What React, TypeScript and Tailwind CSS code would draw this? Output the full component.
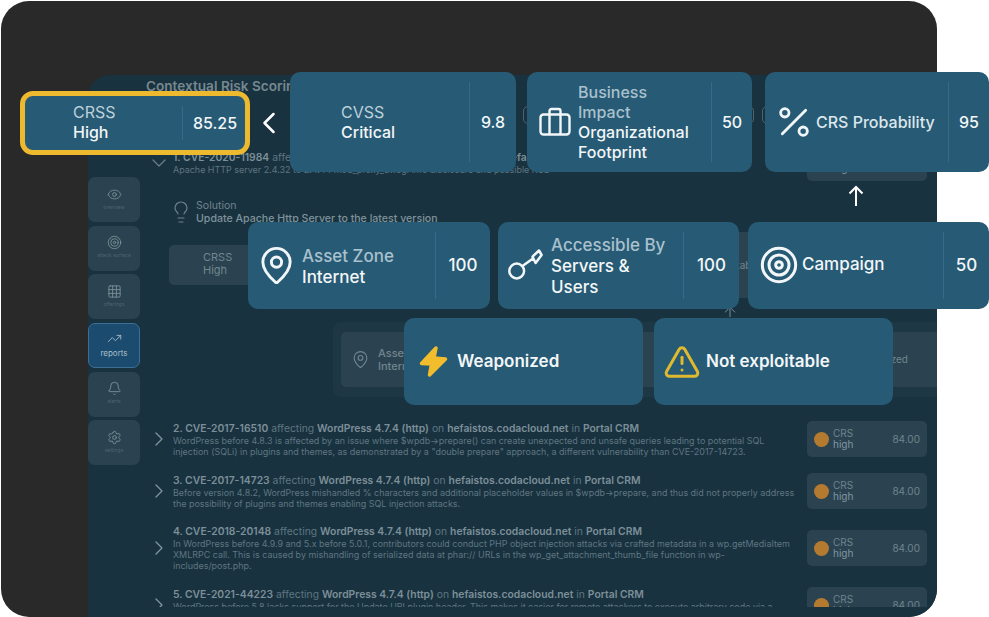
import {
  ArrowUp,
  Bell,
  ChevronDown,
  ChevronLeft,
  ChevronRight,
  Eye,
  Grid3x3,
  Lightbulb,
  MapPin,
  Percent,
  Settings,
  Target,
  TrendingUp,
  TriangleAlert,
} from 'lucide-react';
import type { ReactNode } from 'react';

const NAV = [
  { label: 'overview', Icon: Eye },
  { label: 'attack surface', Icon: Target },
  { label: 'offerings', Icon: Grid3x3 },
  { label: 'reports', Icon: TrendingUp, active: true },
  { label: 'alerts', Icon: Bell },
  { label: 'settings', Icon: Settings },
];

const ROWS = [
  {
    cve: '2. CVE-2017-16510',
    text: 'WordPress before 4.8.3 is affected by an issue where $wpdb->prepare() can create unexpected and unsafe queries leading to potential SQL injection (SQLi) in plugins and themes, as demonstrated by a "double prepare" approach, a different vulnerability than CVE-2017-14723.',
  },
  {
    cve: '3. CVE-2017-14723',
    text: 'Before version 4.8.2, WordPress mishandled % characters and additional placeholder values in $wpdb->prepare, and thus did not properly address the possibility of plugins and themes enabling SQL injection attacks.',
  },
  {
    cve: '4. CVE-2018-20148',
    text: 'In WordPress before 4.9.9 and 5.x before 5.0.1, contributors could conduct PHP object injection attacks via crafted metadata in a wp.getMediaItem XMLRPC call. This is caused by mishandling of serialized data at phar:// URLs in the wp_get_attachment_thumb_file function in wp-includes/post.php.',
  },
  {
    cve: '5. CVE-2021-44223',
    text: 'WordPress before 5.8 lacks support for the Update URI plugin header. This makes it easier for remote attackers to execute arbitrary code via a supply-chain attack against WordPress installations that use any plugin with a crafted update source for that plugin, as the header was not checked.',
  },
];

function Briefcase() {
  return (
    <svg width="32" height="30" viewBox="0 0 32 30" fill="none" stroke="currentColor" strokeWidth="2.4" strokeLinejoin="round" className="shrink-0">
      <rect x="1.5" y="7.5" width="29" height="20" rx="3" />
      <path d="M10.5 7.5v20M21.5 7.5v20M10.5 7.5V4a2 2 0 0 1 2-2h7a2 2 0 0 1 2 2v3.5" />
    </svg>
  );
}

function KeyIcon() {
  return (
    <svg width="35" height="33" viewBox="0 0 35 33" fill="none" stroke="currentColor" strokeWidth="2.5" strokeLinejoin="round" className="shrink-0">
      <circle cx="8.7" cy="22" r="7.4" />
      <path d="M14.5 17 25 9.5M24.5 7.7 31 1.5l2.6 4.5-6 8z" />
    </svg>
  );
}

function Bolt() {
  return (
    <svg width="32" height="35" viewBox="0 0 32 35" className="shrink-0">
      <polygon
        points="18,4 3.5,19.5 13.5,20 11.5,31 27.5,15 16,14"
        fill="#f2bd2c"
        stroke="#f2bd2c"
        strokeWidth="3.5"
        strokeLinejoin="round"
      />
    </svg>
  );
}

function CrsBadge() {
  return (
    <div className="ml-[9px] flex h-[36px] w-[120px] shrink-0 items-center rounded-[5px] bg-[#2b4350] px-[7px] text-[#6f838e]">
      <div className="h-[15px] w-[15px] rounded-full bg-[#b47a30]" />
      <div className="ml-[4px] text-[10px] leading-[11px]">
        CRS
        <br />
        <span className="text-[#8196a1]">high</span>
      </div>
      <div className="ml-auto text-[10px]">84.00</div>
    </div>
  );
}

function Card({ className, children, value }: { className: string; children: ReactNode; value?: string }) {
  return (
    <div className={`absolute flex items-center rounded-[10px] bg-[#275a74] font-medium text-[#f2f6f8] ${className}`}>
      {children}
      {value && (
        <>
          <div className="my-[10px] w-px self-stretch bg-[#356b86]" />
          <div className="flex-1 text-center">{value}</div>
        </>
      )}
    </div>
  );
}

export default function App() {
  return (
    <div className="relative h-[617px] w-[989px] overflow-hidden bg-white font-['Inter',sans-serif]">
      <div className="ml-px mt-px h-[616px] w-[936px] overflow-hidden rounded-[28px] bg-[#292929] pl-[87px] pt-[74px]">
        <div className="flex h-[542px] w-[849px] overflow-hidden rounded-tl-[22px] bg-[#19323f]">
          <nav className="flex w-[52px] shrink-0 flex-col gap-[3.7px] pt-[102px]">
            {NAV.map(({ label, Icon, active }) => (
              <div
                key={label}
                className={`flex h-[45px] shrink-0 flex-col items-center justify-center rounded-[7px] border pb-[3px] ${
                  active ? 'border-[#3d6f95] bg-[#1b4b6e] text-[#a9bfcc]' : 'border-transparent bg-[#2b4350] text-[#7f929c]'
                }`}
              >
                <Icon size={15} strokeWidth={1.4} />
                <span className={`mt-[3px] leading-none ${active ? 'text-[8px]' : 'text-[5px] text-[#4d6470]'}`}>{label}</span>
              </div>
            ))}
          </nav>

          <main className="h-[532px] min-w-0 flex-1 overflow-hidden pl-[5px] pr-[10px]">
            <h1 className="ml-[1px] mt-[2px] whitespace-nowrap text-[13.6px] font-semibold leading-[18px] text-[#76888f]">Contextual Risk Scoring</h1>

            <div className="mt-[11px] flex h-[18px]">
              <div className="ml-[378px] w-[231px] rounded-[5px] border border-[#4d6470]" />
              <div className="ml-[8px] w-[100px] rounded-[5px] border border-[#4d6470]" />
            </div>

            <div className="mt-[21px] flex items-center">
              <ChevronDown size={24} strokeWidth={1.2} className="w-[28px] shrink-0 text-[#6b808b]" />
              <div className="w-[625px] shrink-0 text-[8.95px] leading-[11px] text-[#5f7682]">
                <div className="text-[10.35px] leading-[13px]">
                  <b className="font-semibold text-[#7c8f99]">1. CVE-2020-11984</b> affecting{' '}
                  <b className="font-semibold text-[#7c8f99]">Apache HTTP Server 2.4.41 (http)</b> on{' '}
                  <b className="font-semibold text-[#7c8f99]">hefaistos.codacloud.net</b>
                </div>
                <div>Apache HTTP server 2.4.32 to 2.4.44 mod_proxy_uwsgi info disclosure and possible RCE</div>
              </div>
              <CrsBadge />
            </div>

            <div className="ml-[24px] mt-[18px] flex items-center gap-[3px] text-[#6f838e]">
              <Lightbulb size={24} strokeWidth={1.2} />
              <div className="text-[10.6px] leading-[13px]">
                <div>Solution</div>
                <div className="font-medium text-[#7f929c]">Update Apache Http Server to the latest version</div>
              </div>
            </div>

            <div className="mt-[7px] flex h-[66px] items-center">
              <div className="ml-[24px] h-[40px] w-[120px] rounded-[5px] bg-[#2b4350] pl-[34px] pt-[6px] text-[11px] leading-[13px] text-[#71858f]">
                CRSS
                <br />
                High
              </div>
              <div className="ml-[350px] flex h-full w-[130px] items-center rounded-[6px] bg-[#2b4350] pl-[69px] text-[10px] text-[#71858f]">
                Exploitable
              </div>
            </div>

            <div className="-mr-[10px] ml-[188px] mt-[24px] h-[75px] rounded-l-[8px] bg-[#1d3745] pl-[8px] pt-[10px]">
              <div className="flex h-[55px] items-center gap-[8px] rounded-l-[5px] bg-[#2b4350] pl-[10px] text-[#71858f]">
                <MapPin size={19} strokeWidth={1.4} />
                <div className="text-[11px] font-medium leading-[13px]">
                  Asset Zone
                  <br />
                  Internet
                </div>
                <div className="ml-auto pr-[29px] text-[10px]">Weaponized</div>
              </div>
            </div>

            <div className="mt-[24px] flex flex-col gap-[16px]">
              {ROWS.map((r) => (
                <div key={r.cve} className="flex items-center">
                  <ChevronRight size={24} strokeWidth={1.3} className="w-[28px] shrink-0 text-[#8196a1]" />
                  <div className="w-[625px] shrink-0 text-[8.95px] leading-[11px] text-[#5f7682]">
                    <div className="text-[10.35px] leading-[13px]">
                      <b className="font-semibold text-[#7c8f99]">{r.cve}</b> affecting{' '}
                      <b className="font-semibold text-[#7c8f99]">WordPress 4.7.4 (http)</b> on{' '}
                      <b className="font-semibold text-[#7c8f99]">hefaistos.codacloud.net</b> in{' '}
                      <b className="font-semibold text-[#7c8f99]">Portal CRM</b>
                    </div>
                    <div>{r.text}</div>
                  </div>
                  <CrsBadge />
                </div>
              ))}
            </div>
          </main>
        </div>
      </div>

      <ArrowUp size={16} strokeWidth={1.4} className="absolute left-[722px] top-[304px] text-[#8196a1]" />

      <Card className="left-[20px] top-[91px] h-[64px] w-[230px] rounded-[13px] border-[5px] border-[#edb92e] text-[16px] leading-[20px]">
        <div className="flex h-full w-full items-center">
          <div className="w-[157px] shrink-0 pb-[2px] pl-[48px]">
            <div className="font-normal text-[#bdd0da]">CRSS</div>
            High
          </div>
          <div className="h-[34px] w-px bg-[#356b86]" />
          <div className="flex-1 pl-[2px] text-center">85.25</div>
        </div>
      </Card>
      <ChevronLeft size={36} strokeWidth={1.7} className="absolute left-[251px] top-[105px] text-white" />

      <Card className="left-[290px] top-[72px] h-[100px] w-[226px] text-[16px] leading-[20px]" value="9.8">
        <div className="w-[179px] shrink-0 pl-[51px]">
          <div className="font-normal text-[#bdd0da]">CVSS</div>
          Critical
        </div>
      </Card>

      <Card className="left-[527px] top-[72px] h-[100px] w-[225px] text-[16px] leading-[20px]" value="50">
        <div className="flex w-[184px] shrink-0 items-center gap-[7px] pl-[12px]">
          <Briefcase />
          <div className="w-[122px]">
            <div className="text-[#a9c1ce]">Business Impact</div>
            Organizational Footprint
          </div>
        </div>
      </Card>

      <Card className="left-[765px] top-[72px] h-[100px] w-[224px] text-[16px] leading-[20px]" value="95">
        <div className="flex w-[183px] shrink-0 items-center gap-[8px] pl-[15px]">
          <Percent size={40} strokeWidth={1.7} className="-mx-[6px] shrink-0" />
          <span className="whitespace-nowrap text-[#dce7ed]">CRS Probability</span>
        </div>
      </Card>

      <svg width="16" height="22" viewBox="0 0 16 22" fill="none" stroke="white" strokeWidth="2" className="absolute left-[848px] top-[185px]">
        <path d="M8 21V2M1.5 8.5 8 2l6.5 6.5" />
      </svg>

      <Card className="left-[248px] top-[222px] h-[87px] w-[242px] text-[17px] leading-[21px]" value="100">
        <div className="flex w-[187px] shrink-0 items-center gap-[12px] pl-[15px]">
          <MapPin size={41} strokeWidth={1.7} className="-mx-[7px] shrink-0" />
          <div className="pt-[2px]">
            <div className="text-[#a9c1ce]">Asset Zone</div>
            Internet
          </div>
        </div>
      </Card>

      <Card className="left-[498px] top-[222px] h-[87px] w-[241px] text-[17px] leading-[21px]" value="100">
        <div className="flex w-[185px] shrink-0 items-center gap-[8px] pl-[10px]">
          <KeyIcon />
          <div className="w-[120px] pt-[2px]">
            <div className="whitespace-nowrap text-[#a9c1ce]">Accessible By</div>
            Servers &amp; Users
          </div>
        </div>
      </Card>

      <Card className="left-[748px] top-[222px] h-[87px] w-[241px] text-[17px] leading-[21px]" value="50">
        <div className="flex w-[195px] shrink-0 items-center gap-[6px] pb-[2px] pl-[14px]">
          <Target size={40} strokeWidth={1.8} className="-mx-[3px] shrink-0" />
          <span>Campaign</span>
        </div>
      </Card>

      <Card className="left-[404px] top-[318px] h-[87px] w-[239px] gap-[7px] pl-[14px] text-[17px] font-semibold">
        <Bolt />
        <span>Weaponized</span>
      </Card>

      <Card className="left-[654px] top-[318px] h-[87px] w-[239px] gap-[5px] pl-[9px] text-[17px] font-semibold">
        <TriangleAlert size={38} strokeWidth={1.9} className="shrink-0 text-[#e0b92f]" />
        <span>Not exploitable</span>
      </Card>
    </div>
  );
}
